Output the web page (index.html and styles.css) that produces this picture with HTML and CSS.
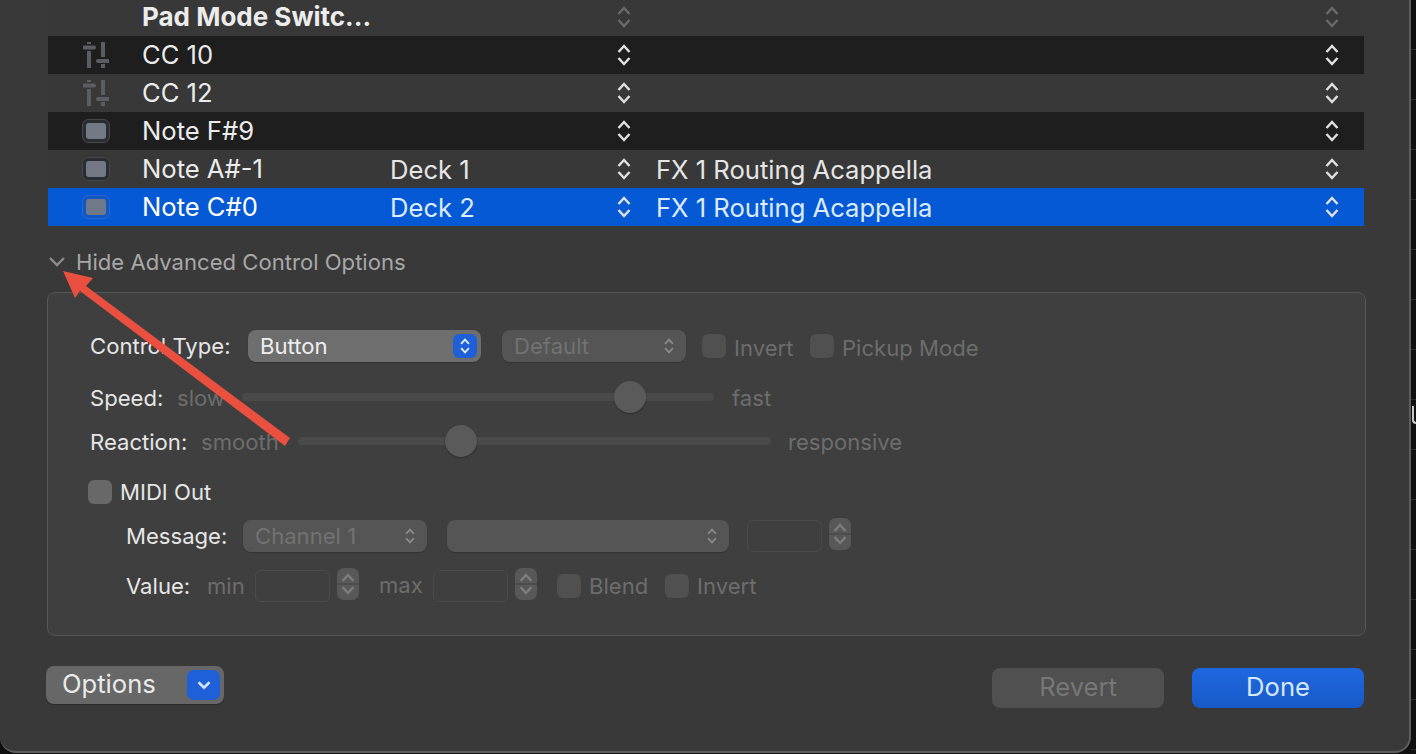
FILE: index.html
```html
<!DOCTYPE html>
<html>
<head>
  <meta charset="UTF-8" />
  <title>Controller Assignments</title>
  <link rel="stylesheet" href="styles.css">
</head>
<body>

  <svg class="defs" width="0" height="0">
    <symbol id="updown" viewBox="0 0 14 22">
      <path d="M1.5 8 L7 2 L12.5 8 M1.5 14 L7 20 L12.5 14" fill="none" stroke="currentColor" stroke-width="2.5"/>
    </symbol>
    <symbol id="fader" viewBox="0 0 26 26">
      <path d="M6 0 V2 M6 9 V26 M20 0 V15 M20 22 V26" fill="none" stroke="currentColor" stroke-width="4"/>
      <path d="M1 5.5 H11 M15 19 H25" fill="none" stroke="currentColor" stroke-width="4" stroke-linecap="round"/>
    </symbol>
  </svg>

  <div class="dialog">
    <div class="table">
      <div class="row row-first">
        <div></div>
        <div class="name bold">Pad Mode Switc...</div>
        <div></div>
        <svg class="updown dim"><use href="#updown"/></svg>
        <div></div>
        <svg class="updown dim"><use href="#updown"/></svg>
      </div>
      <div class="row dark">
        <svg class="fader"><use href="#fader"/></svg>
        <div class="name">CC 10</div>
        <div></div>
        <svg class="updown"><use href="#updown"/></svg>
        <div></div>
        <svg class="updown"><use href="#updown"/></svg>
      </div>
      <div class="row">
        <svg class="fader"><use href="#fader"/></svg>
        <div class="name">CC 12</div>
        <div></div>
        <svg class="updown"><use href="#updown"/></svg>
        <div></div>
        <svg class="updown"><use href="#updown"/></svg>
      </div>
      <div class="row dark">
        <div class="pad"><span></span></div>
        <div class="name">Note F#9</div>
        <div></div>
        <svg class="updown"><use href="#updown"/></svg>
        <div></div>
        <svg class="updown"><use href="#updown"/></svg>
      </div>
      <div class="row">
        <div class="pad"><span></span></div>
        <div class="name">Note A#-1</div>
        <div class="cell">Deck 1</div>
        <svg class="updown"><use href="#updown"/></svg>
        <div class="cell">FX 1 Routing Acappella</div>
        <svg class="updown"><use href="#updown"/></svg>
      </div>
      <div class="row selected">
        <div class="pad"><span></span></div>
        <div class="name">Note C#0</div>
        <div class="cell">Deck 2</div>
        <svg class="updown"><use href="#updown"/></svg>
        <div class="cell">FX 1 Routing Acappella</div>
        <svg class="updown"><use href="#updown"/></svg>
      </div>
    </div>

    <div class="disclosure">
      <svg class="chevron" viewBox="0 0 18 12"><path d="M2 2 L9 9 L16 2" fill="none" stroke="currentColor" stroke-width="2.4"/></svg>
      <span>Hide Advanced Control Options</span>
    </div>

    <div class="panel">
      <div class="line">
        <div class="label w-158">Control Type:</div>
        <div class="select select-on w-233">
          <span>Button</span>
          <span class="knob"><svg class="knob-icon"><use href="#updown"/></svg></span>
        </div>
        <div class="select ml-21 w-184">
          <span>Default</span>
          <svg class="select-icon"><use href="#updown"/></svg>
        </div>
        <div class="check ml-16"></div>
        <div class="check-label low">Invert</div>
        <div class="check"></div>
        <div class="check-label low">Pickup Mode</div>
      </div>

      <div class="line line-slider mt-19">
        <div class="label w-87">Speed:</div>
        <div class="off w-65">slow</div>
        <div class="track w-472"><span class="thumb thumb-speed"></span></div>
        <div class="off ml-18">fast</div>
      </div>

      <div class="line line-slider mt-12">
        <div class="label w-111">Reaction:</div>
        <div class="off w-97">smooth</div>
        <div class="track w-473"><span class="thumb thumb-reaction"></span></div>
        <div class="off ml-17">responsive</div>
      </div>

      <div class="line mt-19">
        <div class="check check-on"></div>
        <div class="label ml-8">MIDI Out</div>
      </div>

      <div class="line line-sub mt-12">
        <div class="label w-116">Message:</div>
        <div class="select w-184">
          <span>Channel 1</span>
          <svg class="select-icon"><use href="#updown"/></svg>
        </div>
        <div class="select ml-20 w-282">
          <span></span>
          <svg class="select-icon"><use href="#updown"/></svg>
        </div>
        <div class="field ml-18"></div>
        <div class="stepper"><svg class="stepper-icon"><use href="#updown"/></svg></div>
      </div>

      <div class="line line-sub mt-18">
        <div class="label w-80">Value:</div>
        <div class="off w-48">min</div>
        <div class="field"></div>
        <div class="stepper"><svg class="stepper-icon"><use href="#updown"/></svg></div>
        <div class="off off-high ml-20 w-54">max</div>
        <div class="field"></div>
        <div class="stepper"><svg class="stepper-icon"><use href="#updown"/></svg></div>
        <div class="check ml-20"></div>
        <div class="check-label">Blend</div>
        <div class="check"></div>
        <div class="check-label">Invert</div>
      </div>
    </div>

    <div class="footer">
      <div class="options">
        <span class="options-text">Options</span>
        <span class="options-knob">
          <svg viewBox="0 0 14 10" width="16" height="11"><path d="M2 2 L7 7 L12 2" fill="none" stroke="currentColor" stroke-width="2.4"/></svg>
        </span>
      </div>
      <div class="spacer"></div>
      <div class="btn btn-revert">Revert</div>
      <div class="btn btn-done">Done</div>
    </div>
  </div>

  <div class="strip"><span class="strip-mark"></span></div>

  <!-- red annotation arrow drawn on top of the screenshot -->
  <svg class="arrow" viewBox="0 0 300 460" width="300" height="460">
    <polygon points="63,271 93,278 86,286 290,438 285,446 80,291 75,298" fill="#e9503f"/>
  </svg>

</body>
</html>
```

FILE: styles.css
```css
* {
  box-sizing: border-box;
}

html, body {
  height: 754px;
}

body {
  margin: 0;
  display: flex;
  overflow: hidden;
  background: #0f0f0f;
  font-family: Inter, "Liberation Sans", sans-serif;
  color: #e6e6e6;
  position: relative;
}

.defs {
  position: absolute;
}

.dialog {
  width: 1411px;
  height: 753px;
  flex: none;
  padding: 0 45px 0 48px;
  background: #393939;
  border-right: 2px solid #5e5e5e;
  border-bottom: 2px solid #5e5e5e;
  border-bottom-right-radius: 16px;
  border-bottom-left-radius: 16px;
}

.strip {
  flex: 1;
  height: 754px;
  overflow: hidden;
  padding-top: 406px;
  background: repeating-linear-gradient(#111 0, #111 49px, #2c2c2c 49px, #2c2c2c 50px);
}

.strip-mark {
  display: block;
  width: 4px;
  height: 18px;
  margin-left: 1px;
  border-left: 2px solid #c8c8c8;
  border-bottom: 2px solid #c8c8c8;
  border-bottom-left-radius: 4px;
}

/* table */

.table {
  font-size: 25.6px;
}

.row {
  display: grid;
  grid-template-columns: 95px 248px 226px 40px 668px 39px;
  align-items: center;
  height: 38px;
  background: #383838;
}

.row-first {
  height: 36px;
  padding-bottom: 2px;
}

.dark {
  background: #1e1e1e;
}

.selected {
  background: #0559d4;
  color: #dcebff;
}

.selected .name {
  color: #fff;
}

.bold {
  font-weight: 700;
  font-size: 26px;
}

.name {
  margin: 0 0 2px -1px;
  white-space: nowrap;
  color: #ececec;
}

.cell {
  margin-left: -1px;
  white-space: nowrap;
}

.updown {
  width: 14px;
  height: 22px;
  color: #e0e0e0;
}

.updown.dim {
  color: #6a6a6a;
}

.fader {
  width: 26px;
  height: 26px;
  margin-left: 35px;
  color: #5a5e63;
}

.pad {
  width: 28px;
  height: 24px;
  margin-left: 34px;
  padding: 3px;
  background: #2a2d31;
  border: 1px solid #44474b;
  border-radius: 6px;
}

.pad span {
  display: block;
  height: 100%;
  background: #737a85;
  border-radius: 3px;
}

.selected .pad {
  background: #1257c4;
  border-color: #2a66c8;
}

.selected .pad span {
  background: #6f7989;
}

/* disclosure */

.disclosure {
  display: flex;
  align-items: center;
  height: 28px;
  margin-top: 22px;
  font-size: 22.1px;
  color: #a8a8a8;
}

.chevron {
  width: 18px;
  height: 12px;
  margin-right: 10px;
  color: #8c8c8c;
}

/* advanced panel */

.panel {
  height: 344px;
  margin: 16px -2px 0 -1px;
  padding: 37px 0 0 42px;
  background: #3f3f3f;
  border: 1px solid #565656;
  border-radius: 8px;
  font-size: 22.1px;
}

.line {
  display: flex;
  align-items: center;
  height: 32px;
  white-space: nowrap;
}

.line-sub {
  padding-left: 37px;
}

.line-sub .label {
  margin-left: -1px;
  margin-right: 1px;
}

.line-slider .label,
.line-slider .off {
  margin-top: 2px;
}

.label {
  color: #e6e6e6;
}

.off {
  color: #6d6d6d;
}

.off-high {
  margin-bottom: 3px;
}

.select {
  display: flex;
  align-items: center;
  justify-content: space-between;
  height: 32px;
  padding: 0 12px;
  background: #555;
  border-radius: 8px;
  color: #727272;
  box-shadow: 0 1px 1px rgba(0, 0, 0, 0.2);
}

.select-on {
  padding-right: 4px;
  background: #6e6e6e;
  color: #eee;
}

.knob {
  display: flex;
  align-items: center;
  justify-content: center;
  width: 24px;
  height: 24px;
  background: #1f5fd8;
  border-radius: 6px;
  color: #e4eeff;
}

.knob-icon {
  width: 10px;
  height: 16px;
}

.select-icon {
  width: 10px;
  height: 16px;
  color: #8a8a8a;
}

.check {
  flex: none;
  width: 24px;
  height: 24px;
  background: #505050;
  border-radius: 6px;
}

.check-on {
  margin-left: -2px;
  background: #686868;
}

.check-label {
  width: 68px;
  margin: 0 8px;
  color: #6d6d6d;
}

.check-label.low {
  margin-top: 3px;
}

.track {
  position: relative;
  height: 8px;
  background: #4a4a4a;
  border-radius: 4px;
}

.thumb {
  position: absolute;
  top: -12px;
  width: 32px;
  height: 32px;
  background: #5a5a5a;
  border-radius: 50%;
  box-shadow: 0 1px 2px rgba(0, 0, 0, 0.3);
}

.thumb-speed {
  left: 372px;
}

.thumb-reaction {
  left: 147px;
}

.field {
  width: 75px;
  height: 32px;
  border: 1px solid #4b4b4b;
  border-radius: 6px;
}

.stepper {
  display: flex;
  align-items: center;
  justify-content: center;
  width: 22px;
  height: 32px;
  margin: 0 0 4px 7px;
  background: linear-gradient(#585858 0, #585858 15px, #4c4c4c 15px, #4c4c4c 17px, #585858 17px);
  border-radius: 7px;
  color: #7d7d7d;
}

.stepper-icon {
  width: 14px;
  height: 24px;
}

/* footer */

.footer {
  display: flex;
  align-items: flex-start;
  margin-top: 30px;
}

.options {
  display: flex;
  align-items: center;
  justify-content: space-between;
  width: 178px;
  height: 38px;
  margin-left: -2px;
  padding: 0 4px 0 16px;
  background: #676767;
  border-radius: 8px;
  font-size: 25.6px;
  color: #eaeaea;
  box-shadow: 0 1px 1px rgba(0, 0, 0, 0.25);
}

.options-text {
  margin-bottom: 4px;
}

.options-knob {
  display: flex;
  align-items: center;
  justify-content: center;
  width: 33px;
  height: 30px;
  background: #1f5fd8;
  border-radius: 7px;
  color: #cfe3ff;
}

.spacer {
  flex: 1;
}

.btn {
  display: flex;
  align-items: center;
  justify-content: center;
  width: 172px;
  height: 40px;
  margin-top: 2px;
  padding-bottom: 3px;
  border-radius: 8px;
  font-size: 25.6px;
}

.btn-revert {
  background: #505050;
  color: #777;
}

.btn-done {
  margin-left: 28px;
  background: linear-gradient(#1f68e0, #1759c8);
  color: #d6e8ff;
}

/* annotation */

.arrow {
  position: absolute;
  left: 0;
  top: 0;
}

/* sizes */

.w-48 { width: 48px; }
.w-54 { width: 54px; }
.w-65 { width: 65px; }
.w-80 { width: 80px; }
.w-87 { width: 87px; }
.w-97 { width: 97px; }
.w-111 { width: 111px; }
.w-116 { width: 116px; }
.w-158 { width: 158px; }
.w-184 { width: 184px; }
.w-233 { width: 233px; }
.w-282 { width: 282px; }
.w-472 { width: 472px; }
.w-473 { width: 473px; }

.ml-8 { margin-left: 8px; }
.ml-16 { margin-left: 16px; }
.ml-17 { margin-left: 17px; }
.ml-18 { margin-left: 18px; }
.ml-20 { margin-left: 20px; }
.ml-21 { margin-left: 21px; }

.mt-12 { margin-top: 12px; }
.mt-18 { margin-top: 18px; }
.mt-19 { margin-top: 19px; }
```
